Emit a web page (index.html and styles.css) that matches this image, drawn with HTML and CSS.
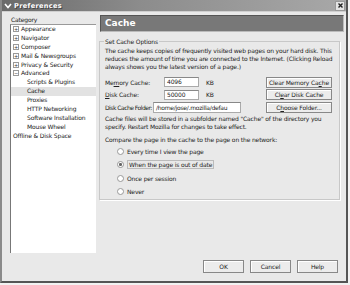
FILE: index.html
```html
<!DOCTYPE html>
<html lang="en">
<head>
    <meta charset="UTF-8">
    <title>Preferences</title>
    <link rel="stylesheet" href="styles.css">
</head>
<body>
<div class="window">
    <div class="titlebar">
        <span class="menu-arrow">
            <svg width="8" height="6" viewBox="0 0 8 6"><path d="M1 1 L4 4.5 L7 1" fill="none" stroke="#fff" stroke-width="1.6"/></svg>
        </span>
        <span class="title">Preferences</span>
        <span class="close">
            <svg width="7" height="7" viewBox="0 0 7 7"><path d="M1.5 1.5 L5.5 5.5 M5.5 1.5 L1.5 5.5" stroke="#222" stroke-width="1.4"/></svg>
        </span>
    </div>
    <div class="body">
        <div class="sidebar">
            <div class="cat-label">Category</div>
            <div class="tree">
                <div class="item top"><span class="exp">+</span>Appearance</div>
                <div class="item top"><span class="exp">+</span>Navigator</div>
                <div class="item top"><span class="exp">+</span>Composer</div>
                <div class="item top"><span class="exp">+</span>Mail &amp; Newsgroups</div>
                <div class="item top"><span class="exp">+</span>Privacy &amp; Security</div>
                <div class="item top"><span class="exp">&minus;</span>Advanced</div>
                <div class="item child">Scripts &amp; Plugins</div>
                <div class="item child selected">Cache</div>
                <div class="item child">Proxies</div>
                <div class="item child">HTTP Networking</div>
                <div class="item child">Software Installation</div>
                <div class="item child">Mouse Wheel</div>
                <div class="item top">Offline &amp; Disk Space</div>
            </div>
        </div>
        <div class="main">
            <div class="header">Cache</div>
            <fieldset class="group">
                <legend>Set Cache Options</legend>
                <p class="desc">The cache keeps copies of frequently visited web pages on your hard disk. This reduces the amount of time you are connected to the Internet. (Clicking Reload always shows you the latest version of a page.)</p>
                <div class="row">
                    <span class="lbl lbl-cache">Me<u>m</u>ory Cache:</span>
                    <span class="field small">4096</span>
                    <span class="unit">KB</span>
                    <span class="btn wide">Clear Memory Ca<u>c</u>he</span>
                </div>
                <div class="row">
                    <span class="lbl lbl-cache"><u>D</u>isk Cache:</span>
                    <span class="field small">50000</span>
                    <span class="unit">KB</span>
                    <span class="btn wide">Cl<u>e</u>ar Disk Cache</span>
                </div>
                <div class="row">
                    <span class="lbl lbl-folder">Disk Cache Folder:</span>
                    <span class="field path">/home/jose/.mozilla/defau</span>
                    <span class="btn wide">C<u>h</u>oose Folder...</span>
                </div>
                <p class="info">Cache files will be stored in a subfolder named "Cache" of the directory you specify. Restart Mozilla for changes to take effect.</p>
                <p class="compare">Compare the page in the cache to the page on the network:</p>
                <div class="radios">
                    <div class="radio"><span class="dot"></span>Every time I view the page</div>
                    <div class="radio checked"><span class="dot"></span><span class="focus">When the page is out of date</span></div>
                    <div class="radio"><span class="dot"></span>Once per session</div>
                    <div class="radio"><span class="dot"></span>Never</div>
                </div>
            </fieldset>
        </div>
    </div>
    <div class="buttons">
        <span class="btn dlg">OK</span>
        <span class="btn dlg">Cancel</span>
        <span class="btn dlg">Help</span>
    </div>
</div>
</body>
</html>
```

FILE: styles.css
```css
body {
    margin: 0;
    padding: 0;
    background: #f2f2f2;
    font-family: "DejaVu Sans", sans-serif;
    font-size: 6px;
    letter-spacing: -0.15px;
    color: #222;
}
.window {
    width: 348px;
    height: 283px;
    background: #e9e9e9;
    border-left: 2px solid #8a8a8a;
    border-right: 2px solid #555;
    border-bottom: 2px solid #555;
    box-sizing: border-box;
    display: flex;
    flex-direction: column;
}
.titlebar {
    height: 11px;
    background: linear-gradient(to right, #6a6a6a, #8c8c8c 40%, #a8a8a8);
    display: flex;
    align-items: center;
    border-bottom: 1px solid #cfcfcf;
}
.menu-arrow {
    width: 12px;
    display: flex;
    justify-content: center;
}
.title {
    color: #fff;
    font-weight: bold;
    font-size: 6.6px;
    letter-spacing: 0.3px;
    flex: 1;
    text-shadow: 1px 1px 0 #444;
}
.close {
    width: 8px;
    height: 8px;
    background: #e4e4e4;
    border: 1px solid #999;
    margin-right: 1px;
    display: flex;
    align-items: center;
    justify-content: center;
}
.body {
    flex: 1;
    display: flex;
}
.sidebar {
    width: 86px;
    padding-left: 8px;
    padding-top: 3px;
}
.cat-label {
    height: 9px;
    line-height: 9px;
    padding-left: 1px;
}
.tree {
    background: #fff;
    height: 228px;
    border-left: 1px solid #777;
    border-top: 1px solid #999;
}
.item {
    height: 8.9px;
    line-height: 8.9px;
    white-space: nowrap;
}
.item.top {
    padding-left: 2px;
}
.item.child {
    padding-left: 16px;
}
.item.selected {
    background: #e2e2e2;
}
.exp {
    display: inline-block;
    width: 4px;
    height: 4px;
    border: 1px solid #999;
    font-size: 5px;
    letter-spacing: 0;
    line-height: 4px;
    text-align: center;
    margin-right: 2px;
    color: #333;
}
.main {
    flex: 1;
    padding-left: 3px;
    padding-right: 2px;
    padding-top: 3px;
}
.header {
    height: 15px;
    margin-left: 1px;
    background: #787878;
    border: 1px solid #555;
    border-bottom-color: #bbb;
    border-right-color: #bbb;
    color: #fff;
    font-weight: bold;
    font-size: 9px;
    letter-spacing: 0;
    line-height: 15px;
    padding-left: 4px;
}
.group {
    margin: 6px 4px 0 0;
    padding: 1px 3px 4px 5px;
    border: 1px solid #c8c8c8;
    box-shadow: 1px 1px 0 #fff;
    height: 162px;
    box-sizing: border-box;
}
.group legend {
    padding: 0 1px;
    margin-left: -1px;
}
.desc, .info, .compare {
    margin: 0;
    line-height: 8px;
}
.desc {
    margin-top: 1px;
    margin-bottom: 5px;
}
.row {
    display: flex;
    align-items: center;
    height: 12.5px;
    padding-right: 4px;
}
.lbl {
    white-space: nowrap;
    flex-shrink: 0;
}
.lbl-cache {
    width: 59px;
}
.lbl-folder {
    width: 48px;
    letter-spacing: -0.5px;
}
.field {
    background: #fff;
    border: 1px solid #aaa;
    border-top-color: #888;
    height: 10px;
    line-height: 8px;
    padding-left: 2px;
    box-sizing: border-box;
    overflow: hidden;
    white-space: nowrap;
    flex-shrink: 0;
}
.field.small {
    width: 35px;
}
.field.path {
    width: 88px;
    height: 11px;
    line-height: 9px;
    letter-spacing: -0.25px;
}
.unit {
    margin-left: 7px;
}
.btn {
    border: 1px solid #888;
    background: #ececec;
    box-shadow: inset 1px 1px 0 #fff;
    text-align: center;
    box-sizing: border-box;
    white-space: nowrap;
}
.btn.wide {
    margin-left: auto;
    width: 66px;
    height: 11px;
    line-height: 9px;
}
.info {
    margin-top: 1px;
}
.compare {
    margin-top: 5px;
}
.radios {
    padding-left: 12px;
    padding-top: 1px;
}
.radio {
    display: flex;
    align-items: center;
    height: 13.5px;
}
.dot {
    width: 5px;
    height: 5px;
    border-radius: 50%;
    border: 1px solid #999;
    background: #fff;
    margin-right: 3px;
}
.radio.checked .dot {
    background: radial-gradient(circle, #666 1.3px, #fff 1.7px);
}
.focus {
    border: 1px solid #bbb;
    padding: 0 1px;
}
.buttons {
    height: 21px;
    display: flex;
    justify-content: flex-end;
    gap: 6px;
    padding-right: 8px;
}
.btn.dlg {
    width: 41px;
    height: 13px;
    line-height: 11px;
}
```
